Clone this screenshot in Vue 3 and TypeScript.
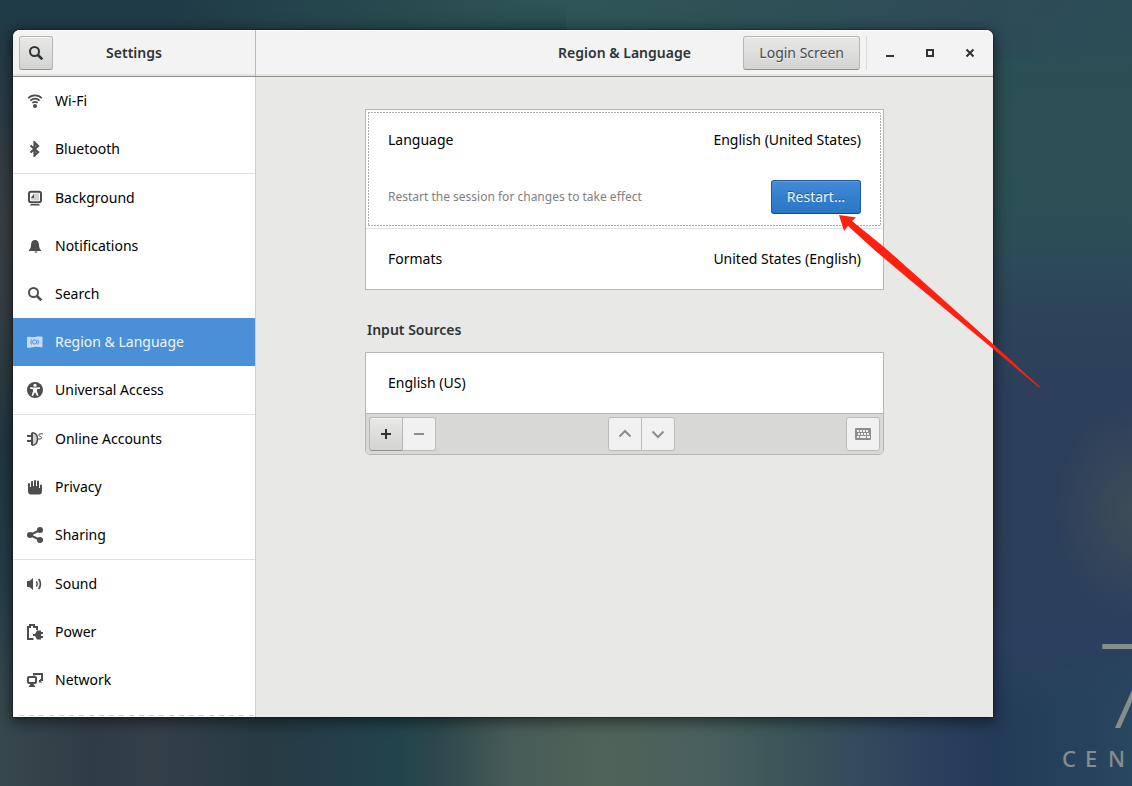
<script setup lang="ts">
interface Item {
  id: string
  label: string
  last?: boolean
}

const items: Item[] = [
  { id: 'wifi', label: 'Wi-Fi' },
  { id: 'bluetooth', label: 'Bluetooth', last: true },
  { id: 'background', label: 'Background' },
  { id: 'bell', label: 'Notifications' },
  { id: 'search', label: 'Search' },
  { id: 'region', label: 'Region & Language' },
  { id: 'access', label: 'Universal Access', last: true },
  { id: 'accounts', label: 'Online Accounts' },
  { id: 'privacy', label: 'Privacy' },
  { id: 'sharing', label: 'Sharing', last: true },
  { id: 'sound', label: 'Sound' },
  { id: 'power', label: 'Power' },
  { id: 'network', label: 'Network' },
]
const active = 'region'
const brand = ['C', 'E', 'N']
</script>

<template>
  <div class="desktop">
    <div class="wallmark" aria-hidden="true">
      <span class="seven">7</span>
      <span class="brand"><span v-for="c in brand" :key="c">{{ c }}</span></span>
    </div>

    <main class="window">
      <header class="bar">
        <div class="bar-side">
          <button class="btn square" type="button" aria-label="Search">
            <svg width="16" height="16" viewBox="0 0 16 16">
              <circle cx="6.5" cy="6.5" r="4.5" fill="none" stroke="#2e3436" stroke-width="2" />
              <path d="M10 10l4.3 4.3" stroke="#2e3436" stroke-width="2.6" />
            </svg>
          </button>
          <h1 class="title">Settings</h1>
          <span></span>
        </div>
        <div class="bar-main">
          <span></span>
          <h2 class="title">Region &amp; Language</h2>
          <div class="bar-end">
            <button class="btn login" type="button">Login Screen</button>
            <span class="bar-sep"></span>
            <button class="ctl" type="button" aria-label="Minimize">
              <svg width="16" height="16" viewBox="0 0 16 16"><path d="M4 10h8v2H4z" fill="#2e3436" /></svg>
            </button>
            <button class="ctl" type="button" aria-label="Maximize">
              <svg width="16" height="16" viewBox="0 0 16 16"><path d="M5 5h6v6H5z" fill="none" stroke="#2e3436" stroke-width="2" /></svg>
            </button>
            <button class="ctl" type="button" aria-label="Close">
              <svg width="16" height="16" viewBox="0 0 16 16"><path d="M4.500 4.500l7 7M11.500 4.500l-7 7" stroke="#2e3436" stroke-width="2" /></svg>
            </button>
          </div>
        </div>
      </header>

      <div class="body">
        <nav class="sidebar">
          <ul class="list">
            <li v-for="it in items" :key="it.id" :class="{ last: it.last }">
              <a href="#" class="item" :class="{ active: it.id === active }">
                <svg class="icon" width="16" height="16" viewBox="0 0 16 16" aria-hidden="true">
                  <g v-if="it.id === 'wifi'" fill="none" stroke="currentColor" stroke-width="1.700">
                    <path d="M1.200 5.200C4.700 1.300 11.300 1.300 14.800 5.200" />
                    <path d="M3.400 7.600C6 4.900 10 4.900 12.600 7.600" />
                    <path d="M5.400 10C7 8.500 9 8.500 10.600 10" />
                    <circle cx="8" cy="13" r="2" fill="currentColor" stroke="none" />
                  </g>
                  <path v-else-if="it.id === 'bluetooth'" d="M3.500 4.500L11 11 7.500 14.500V1.500L11 5 3.500 11.500" fill="none" stroke="currentColor" stroke-width="2.200" />
                  <g v-else-if="it.id === 'background'">
                    <rect x="2" y="1.800" width="12" height="10.400" rx="2" fill="none" stroke="currentColor" stroke-width="2" />
                    <path d="M7 3.500h5v7H4V7z" fill="currentColor" opacity=".25" />
                    <path d="M4 8l3-4v4z" fill="currentColor" />
                    <path d="M4 14h8l1 1.500H3z" fill="currentColor" />
                  </g>
                  <g v-else-if="it.id === 'bell'" fill="currentColor">
                    <path d="M8 2C5.500 2 4.200 3.800 4 6.500c-.2 3-.6 4.500-2 5.500v1h12v-1c-1.400-1-1.800-2.500-2-5.500C11.800 3.800 10.500 2 8 2z" />
                    <path d="M7.500 13.500h3q-.3 1.300-1.500 1.300t-1.500-1.300z" />
                  </g>
                  <g v-else-if="it.id === 'search'" fill="none" stroke="currentColor">
                    <circle cx="6.500" cy="6.500" r="4.500" stroke-width="2" />
                    <path d="M10 10l4.300 4.300" stroke-width="2.600" />
                  </g>
                  <g v-else-if="it.id === 'region'">
                    <path d="M0 3c2.500-1 5 .8 8 0s5-.6 7.500-.2V13c-2.500.7-5-.7-8 0S2.500 14 0 13.500z" fill="currentColor" opacity=".85" />
                    <circle cx="7.600" cy="8" r="2.100" fill="none" stroke="#4a90d9" />
                    <path d="M4.500 5.500q-1.500 2.500 0 5M10.700 5.500q1.500 2.500 0 5" fill="none" stroke="#4a90d9" />
                  </g>
                  <g v-else-if="it.id === 'access'">
                    <circle cx="8" cy="8" r="8" fill="currentColor" />
                    <circle cx="8" cy="3.300" r="1.500" fill="#fff" />
                    <path d="M3 5.300l4 .3h2l4-.3v1.400l-3 .6v2.200l1.500 4-1.500.5L8.200 10.500h-.4L6 14l-1.500-.5 1.500-4V7.300l-3-.6z" fill="#fff" />
                  </g>
                  <g v-else-if="it.id === 'accounts'">
                    <path d="M5 2c4.500 0 6 3 6 6s-1.500 6-6 6z" fill="currentColor" opacity=".25" />
                    <path d="M5 1.800v12.400M0 5h5M0 10h5" fill="none" stroke="currentColor" stroke-width="2" />
                    <path d="M5 1.700c4 0 5.500 3 5.500 6.300S9 14.300 5 14.300" fill="none" stroke="currentColor" stroke-width="1.400" />
                    <path d="M10.500 8h2.500q2-.2 1.500-1.500t-2-1.500 0-2.200H16" fill="none" stroke="currentColor" stroke-width="1" />
                  </g>
                  <path v-else-if="it.id === 'privacy'" d="M1 4.500q1-.8 2 0V8h1V2.500q1-.8 2 0V7h1V1.500q1-.8 2 0V7h1V2q1-.8 2 0v7h1V6q1-.8 2 0v6q0 3.500-3 3.500H4q-3 0-3-3.500z" fill="currentColor" />
                  <g v-else-if="it.id === 'sharing'" fill="currentColor">
                    <path d="M13 3L3 8l10 5" fill="none" stroke="currentColor" stroke-width="2" />
                    <circle cx="3" cy="8" r="3" /><circle cx="13" cy="3" r="3" /><circle cx="13" cy="13" r="3" />
                  </g>
                  <g v-else-if="it.id === 'sound'">
                    <path d="M0 5h2.500L6 2v12l-3.500-3H0z" fill="currentColor" />
                    <path d="M9.500 5.300q1.600 2.700 0 5.400" fill="none" stroke="currentColor" stroke-width="1.500" />
                    <path d="M11.800 3q3.200 5 0 10" fill="none" stroke="currentColor" stroke-width="1.700" />
                  </g>
                  <g v-else-if="it.id === 'power'">
                    <path d="M6.500 15H1V3h2V1h4v2h3v3" fill="none" stroke="currentColor" stroke-width="2" />
                    <path d="M8 10l2-3.500h4V8h2v2h-2v2h2v2h-2v1.500h-4L8 12H6v-2z" fill="currentColor" />
                  </g>
                  <g v-else fill="none" stroke="currentColor" stroke-width="2">
                    <path d="M7 3.500V2h8v6h-2" />
                    <rect x="1" y="5" width="8" height="6" rx="1" />
                    <path d="M3.500 12h3l2 3h-7zM12 8h1l2 2.500h-3z" fill="currentColor" stroke="none" />
                  </g>
                </svg>
                <span>{{ it.label }}</span>
              </a>
            </li>
          </ul>
          <div class="more"></div>
        </nav>

        <section class="content">
          <div class="panel">
            <div class="card">
              <div class="language">
                <div class="row"><span>Language</span><span>English (United States)</span></div>
                <div class="restart">
                  <span>Restart the session for changes to take effect</span>
                  <button class="btn primary" type="button">Restart…</button>
                </div>
              </div>
              <div class="row"><span>Formats</span><span>United States (English)</span></div>
            </div>

            <h3 class="heading">Input Sources</h3>

            <div class="card sources">
              <div class="row"><span>English (US)</span></div>
              <div class="tools">
                <div class="group">
                  <button class="btn square" type="button" aria-label="Add">
                    <svg width="16" height="16" viewBox="0 0 16 16"><path d="M8 3v10M3 8h10" stroke="#2e3436" stroke-width="2" /></svg>
                  </button>
                  <button class="btn square" type="button" aria-label="Remove" disabled>
                    <svg width="16" height="16" viewBox="0 0 16 16"><path d="M3 8h10" stroke="#8b8e8f" stroke-width="2" /></svg>
                  </button>
                </div>
                <div class="group">
                  <button class="btn square" type="button" aria-label="Move up" disabled>
                    <svg width="16" height="16" viewBox="0 0 16 16"><path d="M2.500 10.500L8 5l5.500 5.500" fill="none" stroke="#8b8e8f" stroke-width="2" /></svg>
                  </button>
                  <button class="btn square" type="button" aria-label="Move down" disabled>
                    <svg width="16" height="16" viewBox="0 0 16 16"><path d="M2.500 5.500L8 11l5.500-5.500" fill="none" stroke="#8b8e8f" stroke-width="2" /></svg>
                  </button>
                </div>
                <div class="group">
                  <button class="btn square" type="button" aria-label="Keyboard layout" disabled>
                    <svg width="16" height="16" viewBox="0 0 16 16">
                      <rect y="2" width="16" height="12" rx="1" fill="#8b8e8f" />
                      <path d="M2 5h12M3 8h11" stroke="#f1f1f1" stroke-width="2" stroke-dasharray="2 1" />
                      <path d="M2 11h2M5 11h6M12 11h3" stroke="#f1f1f1" stroke-width="2" />
                    </svg>
                  </button>
                </div>
              </div>
            </div>
          </div>
        </section>
      </div>
    </main>

    <svg class="arrow" width="204" height="176" viewBox="0 0 204 176" aria-hidden="true">
      <path d="M1 1L18 3.500 14 7 46 33 72 56 155 130 202 173 201 173.500 154 134 72 66 37 36.500 10 12 6 17z" fill="#ff2010" />
    </svg>
  </div>
</template>

<style>
body {
  margin: 0;
}
</style>

<style scoped>
* {
  box-sizing: border-box;
}
.desktop {
  position: relative;
  display: flex;
  min-height: 100vh;
  padding: 30px 139px 69px 13px;
  overflow: hidden;
  font: 14px/20px "Noto Sans", sans-serif;
  color: #000;
  background:
    radial-gradient(ellipse 420px 70px at 50% 0, #2f5655, transparent),
    radial-gradient(ellipse 80px 110px at 100% 65%, #3e4c58, transparent),
    linear-gradient(#1e3947, #2d3d45 15%, #3a4044 28%, #333f45 42%, #22373f 57%, #243c48 70%, #36484d 90%) 0 0 / 50% 100% no-repeat,
    linear-gradient(100deg, #2e4a58 86%, transparent 96%) 100% 0 / 100% 60px no-repeat,
    linear-gradient(#2c4c57, #2b5054 18%, #2c4d57 30%, #2c445a 40%, #2c3f5b 50%, #2c3f5a 68%, #2b405e 80%, #28445e);
}
.desktop::before {
  content: "";
  position: absolute;
  inset: auto 0 0;
  height: 140px;
  background: linear-gradient(
    90deg,
    #36484d, #303c45 8%, #343f48 14%, #283b42 23%, #243e4a 29%, #22434c 35%, #2e484c 39%,
    #475b58 45%, #506359 53%, #4a605e 62%, #3b5658 69%, #31475d 78%, #2a3d5c 84%, #233b58 88%, #29475e
  );
  mask-image: linear-gradient(transparent, #000 50%);
}
.wallmark {
  position: absolute;
  right: 0;
  bottom: 0;
  width: 70px;
  height: 166px;
  overflow: hidden;
  color: #848e8d;
}
.seven {
  position: absolute;
  left: 37px;
  top: 25px;
  font: 100 115px/86px Roboto, sans-serif;
  -webkit-text-stroke: 2px #848e8d;
}
.brand {
  position: absolute;
  left: 0;
  bottom: 15px;
  display: grid;
  grid-auto-flow: column;
  grid-auto-columns: 23px;
  font: 500 22px/26px "Noto Sans", sans-serif;
}
.window {
  position: relative;
  flex: 1;
  min-width: 0;
  display: flex;
  flex-direction: column;
  border-radius: 7px 7px 0 0;
  background: #e8e8e6;
  box-shadow: 0 0 0 1px rgba(0, 0, 0, 0.25), 0 3px 14px 2px rgba(0, 0, 0, 0.5);
}
.bar,
.body {
  display: grid;
  grid-template-columns: 243px 1fr;
}
.bar {
  height: 47px;
  border-bottom: 1px solid #8f8f8c;
  border-radius: 7px 7px 0 0;
  background: #f3f3f3;
  box-shadow: inset 0 1px #fff, inset 0 -2px #e4e4e2;
}
.bar-side,
.bar-main {
  display: grid;
  grid-template-columns: 1fr auto 1fr;
  align-items: center;
  padding: 0 6px;
}
.bar-side {
  border-right: 1px solid #b8b8b5;
}
.title,
.heading {
  margin: 0;
  font-size: 14px;
  line-height: 20px;
  font-weight: 600;
  color: #2e3436;
}
.bar-end {
  display: flex;
  justify-content: flex-end;
  align-items: center;
}
.bar-sep {
  width: 1px;
  height: 34px;
  margin: 0 3px 0 6px;
  background: #d9d9d7;
}
.btn {
  display: flex;
  align-items: center;
  justify-content: center;
  height: 34px;
  padding: 0 15px;
  border: 1px solid #b6b6b3;
  border-bottom-color: #91918c;
  border-radius: 3px;
  background: linear-gradient(#e8e8e7, #d3d3d1);
  box-shadow: inset 0 1px #f6f6f5;
  font: inherit;
  color: #2e3436;
  white-space: nowrap;
  text-shadow: 0 1px rgba(255, 255, 255, 0.7);
}
.square {
  width: 34px;
  padding: 0;
}
.login {
  color: #45494b;
}
.ctl {
  display: grid;
  place-items: center;
  width: 40px;
  height: 34px;
  padding: 0;
  border: 0;
  background: none;
}
.bar-end .ctl:last-child {
  margin-right: -3px;
}
.body {
  flex: 1;
}
.sidebar {
  display: flex;
  flex-direction: column;
  border-right: 1px solid #cfcfcd;
  background: #fff;
}
.list {
  margin: 0;
  padding: 0;
  list-style: none;
}
.last {
  border-bottom: 1px solid #e2e2e2;
}
.item {
  display: flex;
  align-items: center;
  gap: 12px;
  height: 48px;
  padding: 0 14px;
  color: inherit;
  text-decoration: none;
}
.icon {
  color: #4d4d4d;
}
.active {
  background: #4a90d9;
  color: #eff5fb;
}
.active .icon {
  color: #dce9f7;
}
.more {
  flex: 1;
  min-height: 13px;
  border-bottom: 1px solid #fff;
  background: repeating-linear-gradient(90deg, #cfd1cd 0 5px, #fff 5px 10px) 6px 100% / auto 1px no-repeat;
}
.content {
  padding: 32px 20px;
}
.panel {
  max-width: 519px;
  margin: 0 auto;
}
.card {
  border: 1px solid #b6b6b3;
  background: #fff;
}
.row {
  display: flex;
  justify-content: space-between;
  align-items: center;
  height: 60px;
  padding: 0 22px;
}
.language {
  --h: repeating-linear-gradient(90deg, #aeaeae 0 2px, #fff 2px 3px);
  --v: repeating-linear-gradient(#aeaeae 0 2px, #fff 2px 3px);
  padding: 2px;
  border-bottom: 1px solid #e2e2e2;
  background:
    var(--h) 0 0 / 100% 1px no-repeat,
    var(--h) 0 100% / 100% 1px no-repeat,
    var(--v) 0 0 / 1px 100% no-repeat,
    var(--v) 100% 0 / 1px 100% no-repeat;
  background-origin: content-box;
  background-clip: content-box;
}
.language .row {
  height: 58px;
  padding: 0 20px 2px;
}
.restart {
  display: flex;
  justify-content: space-between;
  align-items: center;
  padding: 10px 20px 12px;
  font-size: 12px;
  color: #808080;
}
.primary {
  border-color: #1f5c9f;
  border-bottom-color: #184a82;
  background: linear-gradient(#4389d6, #2a76c6);
  box-shadow: inset 0 1px #5b9bdf;
  font-size: 14px;
  color: #eef5fc;
  text-shadow: 0 -1px rgba(0, 0, 0, 0.35);
}
.heading {
  margin: 30px 2px 12px;
}
.sources {
  border-radius: 0 0 5px 5px;
}
.tools {
  display: flex;
  justify-content: space-between;
  padding: 3px;
  border-top: 1px solid #b6b6b3;
  border-radius: 0 0 4px 4px;
  background: #d8d8d6;
}
.group {
  display: flex;
}
.group .btn:first-child:not(:last-child) {
  border-radius: 3px 0 0 3px;
}
.group .btn + .btn {
  width: 33px;
  border-left: 0;
  border-radius: 0 3px 3px 0;
}
.btn:disabled {
  border-color: #bbbbb8;
  background: #f1f1f1;
  box-shadow: none;
}
.arrow {
  position: absolute;
  left: 838px;
  top: 214px;
}
</style>
